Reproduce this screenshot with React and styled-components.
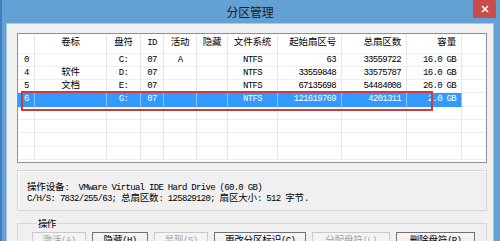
import React from 'react';
import styled, { createGlobalStyle } from 'styled-components';

const Global = createGlobalStyle`
  html, body { margin: 0; padding: 0; background: #3d7dbf; }
  body { width: 500px; height: 241px; overflow: hidden; }
  * { box-sizing: border-box; }
`;

const HAN = /([\u2E80-\u9FFF\uF900-\uFAFF\uFF00-\uFFEF\u3000-\u303F]+)/;

const Han = styled.span`
  font-family: "Noto Sans CJK SC", sans-serif;
  font-size: 9.5px;
  letter-spacing: -0.15px;
  line-height: 0;
`;

const T = ({ children }) =>
  String(children)
    .split(HAN)
    .map((s, i) =>
      s === '' ? null : HAN.test(s) ? <Han key={i}>{s}</Han> : <React.Fragment key={i}>{s}</React.Fragment>
    );

const Window = styled.div`
  width: 500px;
  height: 241px;
  background: #63a0d3;
  border-left: 2px solid #3f7ec1;
  display: flex;
  flex-direction: column;
  font-family: "Liberation Mono", monospace;
  font-size: 9px;
  letter-spacing: -0.7px;
  color: #000;
`;

const TitleBar = styled.div`
  height: 23px;
  flex: none;
  display: grid;
  grid-template-columns: 1fr auto 1fr;
  align-items: start;
`;

const Title = styled.div`
  grid-column: 2;
  align-self: center;
  font-family: "Noto Sans CJK SC", sans-serif;
  font-size: 12px;
  letter-spacing: -0.2px;
  line-height: 23px;
  color: #1c1c1c;
  margin-left: -2px;
`;

const Close = styled.div`
  grid-column: 3;
  justify-self: end;
  margin-right: 4px;
  width: 23px;
  height: 18px;
  background: #c94c4a;
  display: flex;
  align-items: center;
  justify-content: center;
`;

const Body = styled.div`
  flex: 1;
  margin: 0 6px 0 4px;
  border: 1px solid #a9c8e6;
  border-bottom: none;
  background: #f0f0f0;
  padding: 9px 6px 0 10px;
  display: flex;
  flex-direction: column;
`;

const ListBox = styled.div`
  position: relative;
  height: 130px;
  flex: none;
  border: 1px solid #8f9194;
  background: #fff;
  overflow: hidden;
`;

const COLS = '17px 72px 34px 23px 33px 31px 50px 64px 65px 55px 1fr';

const Row = styled.div`
  display: grid;
  grid-template-columns: ${COLS};
  height: ${(p) => p.$h}px;
`;

const Cell = styled.div`
  border-right: 1px solid ${(p) => (p.$sel ? '#8ec3f5' : '#e6e6e6')};
  border-bottom: 1px solid ${(p) => (p.$sel ? '#3399ff' : '#eeeeee')};
  background: ${(p) => (p.$sel ? '#3399ff' : 'transparent')};
  color: ${(p) => (p.$sel ? '#fff' : '#000')};
  text-align: ${(p) => p.$align};
  padding: ${(p) => (p.$align === 'right' ? '0 5px 0 0' : p.$align === 'left' ? '0 0 0 6px' : '0')};
  line-height: ${(p) => p.$h - 1}px;
  white-space: pre;
  overflow: hidden;
`;

const Filler = styled.div`
  border-bottom: 1px solid #eeeeee;
`;

const Marker = styled.div`
  position: absolute;
  left: 3px;
  top: 57px;
  width: 412px;
  height: 20px;
  border: 2px solid #cc3b45;
  pointer-events: none;
`;

const InfoBox = styled.div`
  margin-top: 7px;
  height: 41px;
  flex: none;
  border: 1px solid #d6d6d6;
  box-shadow: inset 1px 1px 0 #fff;
  padding: 12px 9px 0;
`;

const InfoLine = styled.div`
  line-height: 11px;
  white-space: pre;
`;

const Group = styled.fieldset`
  margin: 7px 0 0;
  padding: 3px 0 0 14px;
  border: 1px solid #d6d6d6;
  border-bottom: none;
  min-width: 0;
`;

const Legend = styled.legend`
  margin-left: 5px;
  padding: 0 1px;
  line-height: 11px;
  font-family: "Noto Sans CJK SC", sans-serif;
  font-size: 9.5px;
`;

const Buttons = styled.div`
  display: flex;
  gap: 6px;
`;

const Button = styled.div`
  width: ${(p) => p.$w}px;
  height: 20px;
  border: 1px solid ${(p) => (p.$off ? '#c9c9c9' : '#727272')};
  background: ${(p) => (p.$off ? '#f4f4f4' : 'linear-gradient(#f6f6f6, #e8e8e8)')};
  color: ${(p) => (p.$off ? '#a3a3a3' : '#000')};
  text-align: center;
  line-height: 16px;
  white-space: pre;
`;

const ALIGN = ['left', 'center', 'center', 'center', 'center', 'center', 'center', 'right', 'right', 'right'];
const HEAD = ['', '卷标', '盘符', 'ID', '活动', '隐藏', '文件系统', '起始扇区号', '总扇区数', '容量'];
const HEAD_ALIGN = ['center', 'center', 'center', 'center', 'center', 'center', 'center', 'right', 'right', 'right'];
const DATA = [
  ['0', '', 'C:', '07', 'A', '', 'NTFS', '63', '33559722', '16.0 GB'],
  ['4', '软件', 'D:', '07', '', '', 'NTFS', '33559848', '33575787', '16.0 GB'],
  ['5', '文档', 'E:', '07', '', '', 'NTFS', '67135698', '54484008', '26.0 GB'],
  ['6', '', 'G:', '07', '', '', 'NTFS', '121619769', '4201311', '2.0 GB'],
];
const SELECTED = 3;
const RH = 13.333;

const BUTTONS = [
  { label: '激活(A)', w: 54, off: true },
  { label: '隐藏(H)', w: 56 },
  { label: '显现(S)', w: 54, off: true },
  { label: '更改分区标识(C)', w: 92 },
  { label: '分配盘符(L)', w: 78, off: true },
  { label: '删除盘符(R)', w: 79 },
];

export default function App() {
  return (
    <>
      <Global />
      <Window>
        <TitleBar>
          <Title>分区管理</Title>
          <Close>
            <svg width="8" height="8" viewBox="0 0 8 8">
              <path d="M1 1L7 7M7 1L1 7" stroke="#fff" strokeWidth="1.6" />
            </svg>
          </Close>
        </TitleBar>
        <Body>
          <ListBox>
            <Row $h={19.5}>
              {HEAD.map((h, i) => (
                <Cell key={i} $h={19.5} $align={HEAD_ALIGN[i]}>
                  <T>{h}</T>
                </Cell>
              ))}
              <Filler />
            </Row>
            {DATA.map((r, ri) => (
              <Row key={ri} $h={RH}>
                {r.map((c, ci) => (
                  <Cell key={ci} $h={RH} $align={ALIGN[ci]} $sel={ri === SELECTED}>
                    <T>{c}</T>
                  </Cell>
                ))}
                <Filler />
              </Row>
            ))}
            {[0, 1, 2, 3].map((k) => (
              <Row key={'b' + k} $h={RH}>
                {ALIGN.map((a, ci) => (
                  <Cell key={ci} $h={RH} $align={a} />
                ))}
                <Filler />
              </Row>
            ))}
            <Marker />
          </ListBox>
          <InfoBox>
            <InfoLine>
              <T>{'操作设备:  VMware Virtual IDE Hard Drive (60.0 GB)'}</T>
            </InfoLine>
            <InfoLine>
              <T>{'C/H/S: 7832/255/63; 总扇区数: 125829120; 扇区大小: 512 字节.'}</T>
            </InfoLine>
          </InfoBox>
          <Group>
            <Legend>操作</Legend>
            <Buttons>
              {BUTTONS.map((b) => (
                <Button key={b.label} $w={b.w} $off={b.off}>
                  <T>{b.label}</T>
                </Button>
              ))}
            </Buttons>
          </Group>
        </Body>
      </Window>
    </>
  );
}
